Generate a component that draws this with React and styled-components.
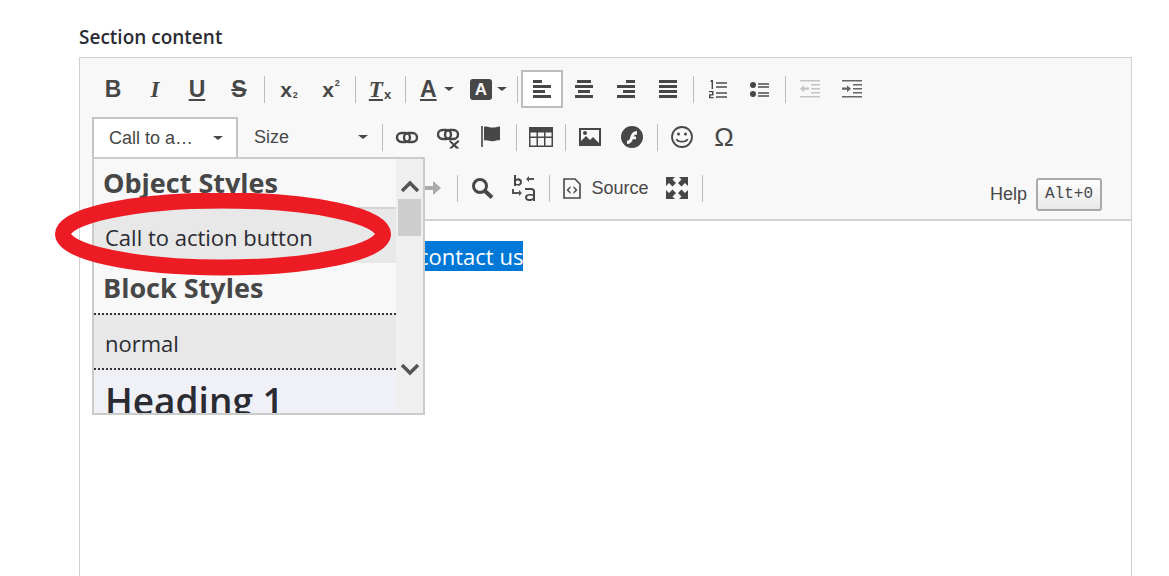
import React from 'react';
import styled, { createGlobalStyle } from 'styled-components';

const GlobalStyle = createGlobalStyle`
  html, body {
    margin: 0;
    padding: 0;
    background: #fff;
    overflow: hidden;
  }
  * { box-sizing: border-box; }
`;

const Page = styled.div`
  height: 576px;
  overflow: hidden;
  padding: 24px 37px 0 79px;
  font-family: "Open Sans", "Noto Sans", sans-serif;
`;

const Label = styled.div`
  font-size: 19px;
  font-weight: 600;
  line-height: 26px;
  height: 33px;
  color: #2b2b33;
`;

const Editor = styled.div`
  position: relative;
  height: 560px;
  border: 1px solid #d1d1d1;
  background: #fff;
`;

const Toolbar = styled.div`
  height: 163px;
  padding: 12px 0 0 12px;
  background: #f8f8f8;
  border-bottom: 2px solid #d1d1d1;
`;

const Row = styled.div`
  display: flex;
  align-items: center;
  height: ${(p) => p.$height || 38}px;
  margin-bottom: ${(p) => p.$gap || 0}px;
`;

const Spacer = styled.div`
  width: ${(p) => p.$width}px;
  flex: none;
`;

const Button = styled.div`
  flex: none;
  width: ${(p) => p.$width || 42}px;
  height: 38px;
  display: flex;
  align-items: center;
  justify-content: ${(p) => (p.$split ? 'flex-start' : 'center')};
  padding-left: ${(p) => (p.$split ? 11 : 0)}px;
  color: #474747;
  opacity: ${(p) => (p.$off ? 0.35 : 1)};
  background: ${(p) => (p.$on ? '#fff' : 'transparent')};
  border: ${(p) => (p.$on ? '2px solid #bcbcbc' : 'none')};
`;

const Sep = styled.div`
  flex: none;
  width: ${(p) => p.$width || 8}px;
  height: 27px;
  display: flex;
  justify-content: center;
  &::before {
    content: '';
    width: 1px;
    background: #bcbcbc;
  }
`;

const Glyph = styled.span`
  font-family: "Liberation Sans", Arial, sans-serif;
  font-size: ${(p) => p.$size || 23}px;
  font-weight: 700;
  font-style: ${(p) => (p.$italic ? 'italic' : 'normal')};
  font-family: ${(p) => (p.$serif ? '"Liberation Serif", serif' : '"Liberation Sans", Arial, sans-serif')};
  text-decoration: ${(p) => p.$line || 'none'};
  text-decoration-thickness: 2px;
  text-underline-offset: 2px;
  line-height: 1;
  color: #474747;
`;

const Script = styled.span`
  font-family: "Liberation Sans", Arial, sans-serif;
  font-size: ${(p) => p.$size || 9}px;
  font-weight: 700;
  position: relative;
  top: ${(p) => p.$top}px;
  margin-left: 1px;
  color: #474747;
`;

const SwatchLetter = styled.span`
  width: 22px;
  height: 21px;
  border-radius: 3px;
  background: #474747;
  color: #f8f8f8;
  font: 700 17px/21px "Liberation Sans", Arial, sans-serif;
  text-align: center;
`;

const Caret = styled.span`
  flex: none;
  width: 0;
  height: 0;
  margin-left: ${(p) => p.$left || 0}px;
  border-left: 5px solid transparent;
  border-right: 5px solid transparent;
  border-top: 4px solid #474747;
`;

const Combo = styled.div`
  flex: none;
  width: ${(p) => p.$width}px;
  height: 40px;
  display: flex;
  align-items: center;
  justify-content: space-between;
  padding: 0 ${(p) => (p.$open ? 13 : 10)}px 0 ${(p) => (p.$open ? 15 : 16)}px;
  background: ${(p) => (p.$open ? '#fff' : 'transparent')};
  border: ${(p) => (p.$open ? '2px solid #c4c4c4' : 'none')};
  border-bottom: none;
  font: 18px "Liberation Sans", Arial, sans-serif;
  color: #474747;
`;

const SourceLabel = styled.span`
  font: 18px "Liberation Sans", Arial, sans-serif;
  color: #474747;
  margin-left: 7px;
`;

const Help = styled.div`
  margin-left: auto;
  margin-right: 29px;
  margin-top: 13px;
  display: flex;
  align-items: center;
  gap: 9px;
  font: 18px "Liberation Sans", Arial, sans-serif;
  color: #474747;
`;

const Kbd = styled.kbd`
  width: 66px;
  height: 33px;
  border: 2px solid #aaa;
  border-radius: 3px;
  background: linear-gradient(#fdfdfd, #e9e9e9);
  font: 16px/29px "Liberation Mono", monospace;
  text-align: center;
  color: #474747;
`;

const Content = styled.div`
  padding: 20px 0 0 338px;
  font-size: 22px;
  line-height: 31px;
  color: #2b2b33;
`;

const Selected = styled.span`
  background: #0078d7;
  color: #fff;
`;

const Panel = styled.div`
  position: absolute;
  left: 12px;
  top: 99px;
  width: 333px;
  height: 258px;
  display: flex;
  background: #f8f8f8;
  border: 2px solid #cbcbcb;
`;

const List = styled.div`
  flex: 1;
  overflow: hidden;
`;

const GroupTitle = styled.div`
  height: ${(p) => p.$height}px;
  padding-left: 9px;
  font-size: 27px;
  font-weight: 700;
  line-height: ${(p) => p.$height}px;
  color: #474747;
`;

const Item = styled.div`
  height: ${(p) => p.$height || 56}px;
  padding-left: 11px;
  background: ${(p) => p.$bg || '#e8e8e8'};
  border-top: ${(p) => p.$top || 'none'};
  border-bottom: ${(p) => p.$bottom || 'none'};
  font-size: ${(p) => p.$size || 22}px;
  font-weight: ${(p) => p.$weight || 400};
  line-height: ${(p) => p.$line || 56}px;
  color: #2b2b33;
`;

const Scrollbar = styled.div`
  flex: none;
  width: 27px;
  display: flex;
  flex-direction: column;
  align-items: center;
  padding: 21px 0 0;
  background: #efefef;
`;

const Thumb = styled.div`
  width: 23px;
  height: 37px;
  margin-top: 7px;
  background: #cdcdcd;
`;

const Ring = styled.svg`
  position: absolute;
  left: -27px;
  top: 135px;
  pointer-events: none;
`;

const Ico = ({ children, w = 24, h = 24, fill = '#474747', stroke = 'none', sw = 0 }) => (
  <svg width={w} height={h} viewBox={`0 0 ${w} ${h}`} fill={fill} stroke={stroke} strokeWidth={sw}>
    {children}
  </svg>
);

// four horizontal bars, each [x, width]
const Bars = ({ rows }) => (
  <Ico>
    {rows.map(([x, w], i) => (
      <rect key={i} x={x} y={3 + i * 5} width={w} height="3" />
    ))}
  </Ico>
);

const OrderedList = () => (
  <Ico>
    <rect x="10" y="5" width="11" height="2" fill="#777" />
    <rect x="10" y="9" width="11" height="2" fill="#777" />
    <rect x="10" y="15" width="11" height="2" fill="#777" />
    <rect x="10" y="19" width="11" height="2" fill="#777" />
    <path d="M5 3h2v9H5.6V5H4.4zM3 14h4.5v4.4H4.5V20h3v1.2H3v-4h3v-2H3z" />
  </Ico>
);

const BulletList = () => (
  <Ico>
    <circle cx="5" cy="8" r="3" />
    <circle cx="5" cy="17" r="3" />
    <rect x="10" y="6" width="11" height="2" fill="#777" />
    <rect x="10" y="9" width="11" height="2" fill="#777" />
    <rect x="10" y="15" width="11" height="2" fill="#777" />
    <rect x="10" y="18" width="11" height="2" fill="#777" />
  </Ico>
);

const IndentIcon = ({ out }) => (
  <Ico>
    <g fill="#666">
      <rect x="2" y="3" width="20" height="1.5" />
      <rect x="13" y="7" width="9" height="1.5" />
      <rect x="13" y="11" width="9" height="1.5" />
      <rect x="13" y="15" width="9" height="1.5" />
      <rect x="2" y="19" width="20" height="1.5" />
      {out ? <path d="M2 11.7l4-3.5v2.4h5v2.2H6v2.4z" /> : <path d="M11 11.7l-4-3.5v2.4H2v2.2h5v2.4z" />}
    </g>
  </Ico>
);

const LinkIcon = () => (
  <Ico>
    <g fill="none" stroke="#474747" strokeWidth="2.4">
      <rect x="2" y="8" width="13" height="9" rx="4.5" />
      <rect x="9" y="8" width="13" height="9" rx="4.5" />
    </g>
  </Ico>
);

const UnlinkIcon = () => (
  <Ico>
    <g fill="none" stroke="#474747" strokeWidth="2.4">
      <rect x="1" y="5" width="13" height="9" rx="4.5" />
      <rect x="8" y="5" width="13" height="9" rx="4.5" />
    </g>
    <path d="M13 15l4 3.5 4-3.5 1.5 1.5-3.8 3.5 3.8 3.5H19l-2-2-2 2h-3l3.6-3.5-3.6-3.5z" />
  </Ico>
);

const FlagIcon = () => (
  <Ico>
    <rect x="2" y="1" width="2" height="21" fill="#666" />
    <path d="M5 2c3-1.4 5 .6 8 .6 3 0 5-1 8-1.2V15c-3 0-5 1.4-8 1.2-3 0-5-1.6-8-.4z" />
  </Ico>
);

const TableIcon = () => (
  <Ico w={26} h={22}>
    <path fillRule="evenodd" d="M1 1h24v20H1zM2.5 6.500v4h6v-4zm7.500 0v4h6v-4zm7.500 0v4h6v-4zM2.500 12v7.500h6V12zm7.500 0v7.500h6V12zm7.500 0v7.500h6V12z" />
  </Ico>
);

const ImageIcon = () => (
  <Ico>
    <path fillRule="evenodd" d="M1 3h22v18H1zM3 5v11l5-5 4 4 3-3 6 6V5z" />
    <circle cx="7" cy="8" r="2" />
  </Ico>
);

const FlashIcon = () => (
  <Ico>
    <path fillRule="evenodd" d="M12 1a11 11 0 1 0 0 22 11 11 0 0 0 0-22zm5 5v3.500c-2 0-3 .8-3.300 2H16v2.800h-3.200C12 17.500 10 19 7 19v-3.200c1.800 0 2.700-.9 3.200-3 .7-3.800 2.800-6.800 6.800-6.800z" />
  </Ico>
);

const SmileyIcon = () => (
  <Ico fill="none" stroke="#474747" sw={1.8}>
    <circle cx="12" cy="12" r="10" />
    <path d="M6.500 14c1.200 3.600 9.800 3.600 11 0" />
    <circle cx="8.500" cy="9" r="1.500" fill="#474747" stroke="none" />
    <circle cx="15.500" cy="9" r="1.500" fill="#474747" stroke="none" />
  </Ico>
);

const RedoIcon = () => (
  <Ico>
    <path d="M3 10h10V5l8 7-8 7v-5H3z" fill="#777" />
  </Ico>
);

const SearchIcon = () => (
  <Ico fill="none" stroke="#474747" sw={3}>
    <circle cx="10" cy="10" r="6.500" />
    <path d="M15 15l7 6.500" strokeWidth="4" />
  </Ico>
);

const ReplaceIcon = () => (
  <Ico w={26} h={28}>
    <path d="M3 1h2v4c2.500-1.500 6-.5 6 3s-3.500 4.500-6 3v1H3zm2 6v2.500c1 .8 4 .9 4-1.200S6 6.200 5 7z" />
    <path d="M18 2l-3 3 3 3V6h5V4h-5zM3 15v3h5v-2l3 3-3 3v-2H1v-5z" fill="#555" />
    <path d="M14 14h6c3 0 4 1.500 4 3.500V27h-2v-1c-2.500 1.700-8 1.500-8-2.500 0-3.500 4.500-4 8-3v-3c0-1-1-1.500-2-1.500h-6zm8 8c-2.500-1-6-.6-6 1.500 0 2.100 4.500 1.700 6 .5z" />
  </Ico>
);

const SourceIcon = () => (
  <Ico>
    <path fill="none" stroke="#474747" strokeWidth="1.600" d="M4 3h11l5 5v14H4z" />
    <path d="M10.500 10l-4 4 4 4v-2l-2-2 2-2zM13.500 10l4 4-4 4v-2l2-2-2-2z" />
  </Ico>
);

const MaximizeIcon = () => (
  <Ico>
    <path d="M1 1h9L7.500 3.500 11 7l-3.500 3.500L4 7 1 10zM23 1h-9l2.500 2.500L13 7l3.500 3.500L20 7l3 3zM1 23h9l-2.500-2.500L11 17l-3.500-3.500L4 17l-3-3zM23 23h-9l2.500-2.500L13 17l3.500-3.500L20 17l3-3z" />
  </Ico>
);

const Chevron = ({ up }) => (
  <svg width="20" height="12" viewBox="0 0 20 12">
    <path d={up ? 'M2 11l8-8 8 8' : 'M2 1l8 8 8-8'} fill="none" stroke="#555" strokeWidth="3.500" />
  </svg>
);

export default function App() {
  return (
    <>
      <GlobalStyle />
      <Page>
        <Label>Section content</Label>
        <Editor>
          <Toolbar>
            <Row $gap={9}>
              <Button><Glyph>B</Glyph></Button>
              <Button><Glyph $italic $serif>I</Glyph></Button>
              <Button><Glyph $line="underline">U</Glyph></Button>
              <Button><Glyph $line="line-through">S</Glyph></Button>
              <Sep />
              <Button><Glyph $size={21}>x</Glyph><Script $top={6}>2</Script></Button>
              <Button><Glyph $size={21}>x</Glyph><Script $top={-6}>2</Script></Button>
              <Sep $width={7} />
              <Button><Glyph $italic $serif $line="underline">T</Glyph><Script $top={5} $size={13}>x</Script></Button>
              <Sep />
              <Button $width={52} $split><Glyph $line="underline">A</Glyph><Caret $left={7} /></Button>
              <Button $width={52} $split style={{ paddingLeft: 9 }}><SwatchLetter>A</SwatchLetter><Caret $left={5} /></Button>
              <Sep />
              <Button $on><Bars rows={[[3, 9], [3, 18], [3, 12], [3, 18]]} /></Button>
              <Button><Bars rows={[[5, 14], [3, 18], [6, 12], [3, 18]]} /></Button>
              <Button><Bars rows={[[12, 9], [3, 18], [9, 12], [3, 18]]} /></Button>
              <Button><Bars rows={[[3, 18], [3, 18], [3, 18], [3, 18]]} /></Button>
              <Sep />
              <Button><OrderedList /></Button>
              <Button><BulletList /></Button>
              <Sep />
              <Button $off><IndentIcon out /></Button>
              <Button><IndentIcon /></Button>
            </Row>
            <Row $height={40} $gap={12}>
              <Combo $open $width={146}>Call to a…<Caret /></Combo>
              <Combo $width={140}>Size<Caret /></Combo>
              <Sep $width={8} />
              <Button><LinkIcon /></Button>
              <Button><UnlinkIcon /></Button>
              <Button><FlagIcon /></Button>
              <Sep />
              <Button><TableIcon /></Button>
              <Sep $width={7} />
              <Button><ImageIcon /></Button>
              <Button><FlashIcon /></Button>
              <Sep />
              <Button><SmileyIcon /></Button>
              <Button><Glyph $size={26} style={{ fontWeight: 400 }}>Ω</Glyph></Button>
            </Row>
            <Row>
              <Spacer $width={319} />
              <Button $off style={{ opacity: 0.6 }}><RedoIcon /></Button>
              <Sep />
              <Button><SearchIcon /></Button>
              <Button><ReplaceIcon /></Button>
              <Sep />
              <Button $width={103}><SourceIcon /><SourceLabel>Source</SourceLabel></Button>
              <Button><MaximizeIcon /></Button>
              <Sep />
              <Help>Help <Kbd>Alt+0</Kbd></Help>
            </Row>
          </Toolbar>
          <Content>
            <Selected>contact us</Selected>
          </Content>
          <Panel>
            <List>
              <GroupTitle $height={48}>Object Styles</GroupTitle>
              <Item $top="2px solid #d4d4d4">Call to action button</Item>
              <GroupTitle $height={50}>Block Styles</GroupTitle>
              <Item $top="2px dotted #333" $bottom="2px dotted #333" $height={57}>normal</Item>
              <Item $bg="#f0f1f6" $size={37} $weight={600} $line={62}>Heading 1</Item>
            </List>
            <Scrollbar>
              <Chevron up />
              <Thumb />
              <Spacer $width={1} style={{ height: 128 }} />
              <Chevron />
            </Scrollbar>
          </Panel>
          <Ring width="345" height="90" viewBox="0 0 345 90">
            <ellipse cx="170" cy="41" rx="160" ry="33.500" fill="none" stroke="#ed1c24" strokeWidth="16" />
          </Ring>
        </Editor>
      </Page>
    </>
  );
}
